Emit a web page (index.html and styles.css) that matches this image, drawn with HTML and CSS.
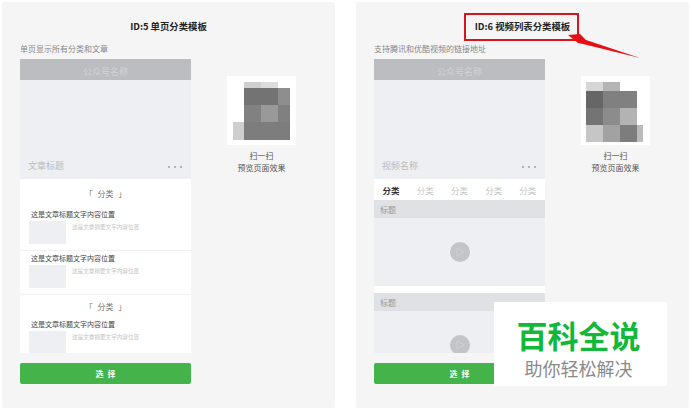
FILE: index.html
```html
<!DOCTYPE html>
<html lang="zh-CN">

<head>
    <meta charset="UTF-8">
    <title>模板选择</title>
    <link rel="stylesheet" href="styles.css">
</head>

<body>
    <div class="page">
        <div class="card">
            <h2>ID:5 单页分类模板</h2>
            <p class="desc">单页显示所有分类和文章</p>
            <div class="card-body">
                <div class="phone">
                    <div class="phone-head">公众号名称</div>
                    <div class="cover"><span>文章标题</span><span class="dots"><i></i><i></i><i></i></span></div>
                    <div class="cate">「 分类 」</div>
                    <div class="list">
                        <div class="item">
                            <div class="item-title">这是文章标题文字内容位置</div>
                            <div class="item-row">
                                <div class="thumb"></div>
                                <div class="item-desc">这是文章摘要文字内容位置</div>
                            </div>
                        </div>
                        <div class="item">
                            <div class="item-title">这是文章标题文字内容位置</div>
                            <div class="item-row">
                                <div class="thumb"></div>
                                <div class="item-desc">这是文章摘要文字内容位置</div>
                            </div>
                        </div>
                    </div>
                    <div class="cate cate-second">「 分类 」</div>
                    <div class="list">
                        <div class="item">
                            <div class="item-title">这是文章标题文字内容位置</div>
                            <div class="item-row">
                                <div class="thumb"></div>
                                <div class="item-desc">这是文章摘要文字内容位置</div>
                            </div>
                        </div>
                    </div>
                </div>
                <div class="qr-box">
                    <div class="qr">
                        <svg width="69" height="69" viewBox="0 0 69 69">
                            <rect x="17" y="6" width="17" height="6" fill="#cfcfd0" />
                            <rect x="34" y="6" width="17" height="6" fill="#dcdcdd" />
                            <rect x="17" y="12" width="34" height="17" fill="#737373" />
                            <rect x="51" y="12" width="12" height="17" fill="#8e8e8e" />
                            <rect x="17" y="29" width="17" height="17" fill="#818181" />
                            <rect x="34" y="29" width="17" height="17" fill="#999" />
                            <rect x="51" y="29" width="12" height="17" fill="#808080" />
                            <rect x="6" y="46" width="11" height="18" fill="#cfcfcf" />
                            <rect x="17" y="46" width="46" height="18" fill="#7d7d7d" />
                        </svg>
                    </div>
                    <div class="qr-text">扫一扫<br>预览页面效果</div>
                </div>
            </div>
            <div class="btn">选 择</div>
        </div>

        <div class="card">
            <h2>ID:6 视频列表分类模板</h2>
            <p class="desc">支持腾讯和优酷视频的链接地址</p>
            <div class="card-body">
                <div class="phone">
                    <div class="phone-head">公众号名称</div>
                    <div class="cover"><span>视频名称</span><span class="dots"><i></i><i></i><i></i></span></div>
                    <div class="tabs">
                        <span class="active">分类</span><span>分类</span><span>分类</span><span>分类</span><span>分类</span>
                    </div>
                    <div class="video-title">标题</div>
                    <div class="video">
                        <div class="play"><svg width="10" height="10" viewBox="0 0 10 10"><path d="M2 1l7 4-7 4z" fill="none" stroke="#d3d4d6" stroke-width="0.8" /></svg></div>
                    </div>
                    <div class="video-title video-title-second">标题</div>
                    <div class="video">
                        <div class="play"><svg width="10" height="10" viewBox="0 0 10 10"><path d="M2 1l7 4-7 4z" fill="none" stroke="#d3d4d6" stroke-width="0.8" /></svg></div>
                    </div>
                </div>
                <div class="qr-box">
                    <div class="qr">
                        <svg width="69" height="69" viewBox="0 0 69 69">
                            <rect x="5" y="6" width="17" height="9" fill="#d6d6d7" />
                            <rect x="22" y="6" width="17" height="9" fill="#b4b4b5" />
                            <rect x="5" y="15" width="17" height="17" fill="#666" />
                            <rect x="22" y="15" width="34" height="17" fill="#808080" />
                            <rect x="5" y="32" width="17" height="17" fill="#747474" />
                            <rect x="22" y="32" width="17" height="17" fill="#8c8c8c" />
                            <rect x="39" y="32" width="17" height="17" fill="#b3b3b3" />
                            <rect x="5" y="49" width="17" height="17" fill="#c6c6c6" />
                            <rect x="22" y="49" width="17" height="17" fill="#a2a2a2" />
                            <rect x="39" y="49" width="17" height="17" fill="#7d7d7d" />
                            <rect x="56" y="49" width="6" height="17" fill="#bbb" />
                        </svg>
                    </div>
                    <div class="qr-text">扫一扫<br>预览页面效果</div>
                </div>
            </div>
            <div class="btn">选 择</div>
        </div>
    </div>

    <!-- annotation on top of the screenshot -->
    <div class="mark-box"></div>
    <svg class="mark-arrow" width="80" height="30" viewBox="0 0 80 30">
        <path d="M2 3 L14 2 L20 8 L74 26 L17 12 L12 11 Z" fill="#e60f14" />
    </svg>

    <div class="watermark">
        <div class="wm-big">百科全说</div>
        <div class="wm-small">助你轻松解决</div>
    </div>
</body>

</html>
```

FILE: styles.css
```css
* {
    box-sizing: border-box;
}

body {
    margin: 0;
    background-color: #fff;
    font-family: "Noto Sans CJK SC", "Liberation Sans", sans-serif;
    color: #333;
}

.page {
    display: flex;
    gap: 21px;
    padding: 2px 3px 3px 2px;
}

.card {
    width: 333px;
    height: 406px;
    padding: 0 18px;
    background-color: #f5f5f6;
    border-radius: 2px;
}

.card h2 {
    margin: 0;
    padding-top: 16px;
    height: 37px;
    font-size: 9.4px;
    line-height: 16px;
    font-weight: bold;
    color: #222;
    text-align: center;
}

.desc {
    margin: 0;
    height: 20px;
    font-size: 8px;
    line-height: 19px;
    color: #888;
}

.card-body {
    display: flex;
}

.phone {
    width: 171px;
    height: 294px;
    overflow: hidden;
    background-color: #fff;
}

.phone-head {
    height: 21px;
    padding-top: 2px;
    background-color: #bcbdc0;
    color: #d2d3d6;
    font-size: 9px;
    line-height: 21px;
    text-align: center;
}

.cover {
    display: flex;
    justify-content: space-between;
    align-items: flex-end;
    height: 99px;
    padding: 0 9px 5px 8px;
    background-color: #eeeff3;
    color: #bbb;
    font-size: 9px;
    line-height: 16px;
}

.dots {
    display: flex;
    gap: 4px;
    padding-bottom: 6px;
}

.dots i {
    width: 2px;
    height: 2px;
    background-color: #b4b4b6;
}

.cate {
    height: 28px;
    padding-top: 1px;
    font-size: 8px;
    line-height: 27px;
    word-spacing: 3px;
    color: #777;
    text-align: center;
}

.cate-second {
    height: 24px;
    margin-top: -2px;
    padding-top: 0;
}

.item {
    height: 44px;
    padding: 0 9px;
    border-bottom: 1px solid #f1f1f3;
}

.item-title {
    height: 14px;
    font-size: 7px;
    line-height: 14px;
    color: #444;
    padding-left: 2px;
}

.item-row {
    display: flex;
    gap: 6px;
}

.thumb {
    width: 37px;
    height: 23px;
    background-color: #eeeff3;
}

.item-desc {
    font-size: 5.6px;
    line-height: 12px;
    color: #c4c4c4;
}

.tabs {
    display: flex;
    justify-content: space-around;
    height: 21px;
    font-size: 8.5px;
    line-height: 23px;
    color: #c4c4c4;
}

.tabs .active {
    color: #333;
    font-weight: bold;
}

.video-title {
    height: 18px;
    padding-left: 6px;
    background-color: #e0e1e4;
    color: #999;
    font-size: 8px;
    line-height: 20px;
}

.video-title-second {
    margin-top: 7px;
}

.video {
    display: flex;
    align-items: center;
    justify-content: center;
    height: 68px;
    background-color: #eeeff3;
}

.play {
    display: flex;
    align-items: center;
    justify-content: center;
    width: 20px;
    height: 20px;
    border-radius: 50%;
    background-color: #c3c4c6;
}

.qr-box {
    margin-left: 36px;
    padding-top: 17px;
    width: 69px;
}

.qr {
    width: 69px;
    height: 69px;
    background-color: #fff;
}

.qr svg {
    display: block;
}

.qr-text {
    margin-top: 5px;
    margin-left: -10px;
    margin-right: -10px;
    font-size: 8px;
    line-height: 12px;
    color: #555;
    text-align: center;
}

.btn {
    margin-top: 10px;
    width: 171px;
    height: 21px;
    border-radius: 2px;
    background-color: #43b34a;
    color: #fff;
    font-size: 8px;
    font-weight: bold;
    line-height: 21px;
    word-spacing: 2px;
    text-align: center;
}

.mark-box {
    position: absolute;
    left: 464px;
    top: 13px;
    width: 115px;
    height: 28px;
    border: 2px solid #d9141a;
}

.mark-arrow {
    position: absolute;
    left: 566px;
    top: 32px;
}

.watermark {
    position: absolute;
    left: 494px;
    top: 302px;
    width: 173px;
    height: 84px;
    padding-right: 4px;
    background-color: #fff;
    text-align: center;
}

.wm-big {
    margin-top: 15px;
    font-size: 31px;
    line-height: 36px;
    font-weight: bold;
    color: #12b83a;
}

.wm-small {
    margin-top: 4px;
    font-size: 18px;
    line-height: 22px;
    color: #8a8a8a;
}
```
